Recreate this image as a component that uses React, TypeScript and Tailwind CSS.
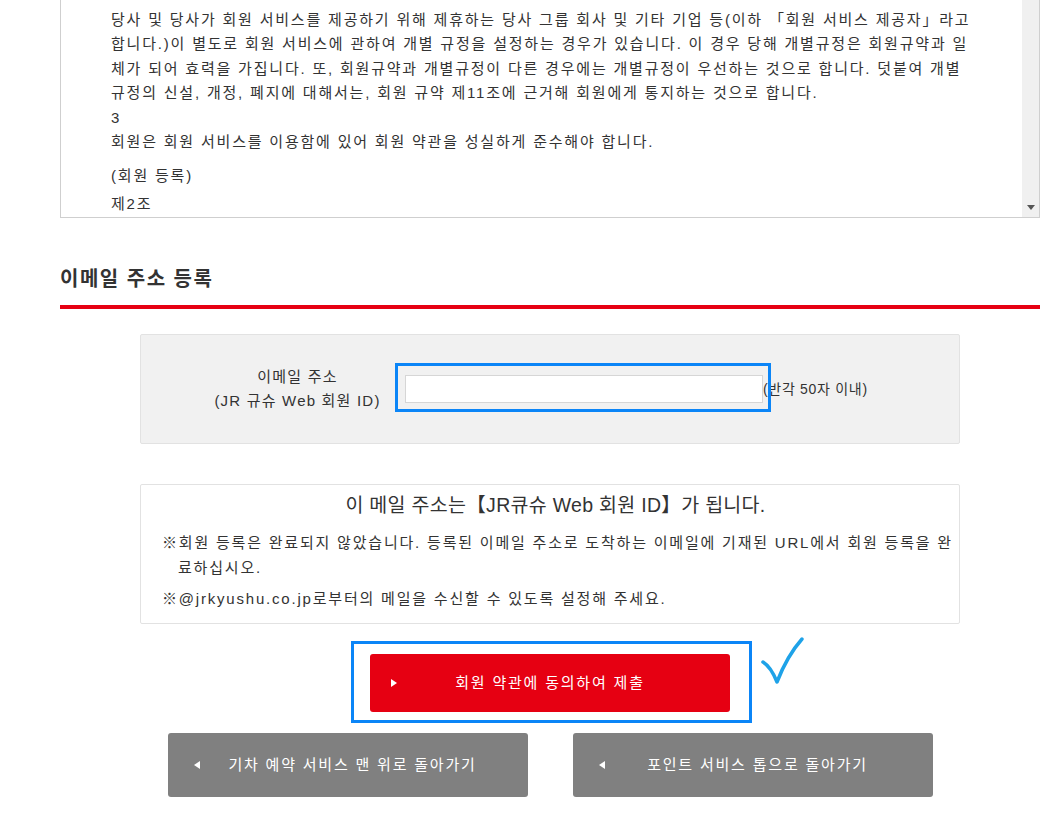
import React from "react";

const terms = [
  "당사 및 당사가 회원 서비스를 제공하기 위해 제휴하는 당사 그룹 회사 및 기타 기업 등(이하 「회원 서비스 제공자」라고",
  "합니다.)이 별도로 회원 서비스에 관하여 개별 규정을 설정하는 경우가 있습니다. 이 경우 당해 개별규정은 회원규약과 일",
  "체가 되어 효력을 가집니다. 또, 회원규약과 개별규정이 다른 경우에는 개별규정이 우선하는 것으로 합니다. 덧붙여 개별",
  "규정의 신설, 개정, 폐지에 대해서는, 회원 규약 제11조에 근거해 회원에게 통지하는 것으로 합니다.",
];

function TermsBox() {
  return (
    <div className="flex h-[218px] border border-t-0 border-[#cfcfcf]">
      <div className="flex-1 overflow-hidden pl-[50px] text-[15px] leading-[24.5px] text-[#333]">
        <div className="-mt-[17px]">
          <p>2</p>
          <p>
            {terms.map((t, i) => (
              <span key={i} className="block whitespace-nowrap">
                {t}
              </span>
            ))}
          </p>
          <p>3</p>
          <p>회원은 회원 서비스를 이용함에 있어 회원 약관을 성실하게 준수해야 합니다.</p>
          <p className="mt-[9px]">(회원 등록)</p>
          <p className="mt-[4px]">제2조</p>
        </div>
      </div>
      {/* fake scrollbar */}
      <div className="flex w-[17px] flex-col justify-end items-center bg-[#f0f0f0] pb-[7px]">
        <svg width="8" height="5" viewBox="0 0 8 5">
          <path d="M0 0H8L4 5Z" fill="#555" />
        </svg>
      </div>
    </div>
  );
}

function Arrow({ dir }: { dir: "left" | "right" }) {
  return (
    <svg
      width="6"
      height="8"
      viewBox="0 0 6 8"
      className="absolute top-1/2 -translate-y-1/2"
      style={{ left: dir === "right" ? 21 : 26 }}
    >
      {dir === "right" ? (
        <path d="M0 0L6 4L0 8Z" fill="#fff" />
      ) : (
        <path d="M6 0L0 4L6 8Z" fill="#fff" />
      )}
    </svg>
  );
}

export default function App() {
  return (
    <div className="min-h-[831px] bg-white font-['Liberation_Sans','Noto_Sans_CJK_KR',sans-serif] tracking-[1.8px] text-[#333]">
      <div className="ml-[60px] w-[980px] pb-[34px]">
        <TermsBox />

        <h2 className="mt-[49px] pb-[14px] text-[20px] font-bold leading-[24px] tracking-[1.5px] text-[#333]">
          이메일 주소 등록
        </h2>
        <div className="h-[4px] bg-[#e60012]" />

        {/* email input panel */}
        <div className="mx-auto mt-[25px] flex h-[110px] w-[820px] items-center rounded-[2px] border border-[#e2e2e2] bg-[#f1f1f1] pl-[49px]">
          <div className="w-[215px] text-center text-[15px] leading-[24px] tracking-[1.2px] text-[#333]">
            <p>이메일 주소</p>
            <p>(JR 규슈 Web 회원 ID)</p>
          </div>
          <div className="relative">
            <input
              type="text"
              className="block h-[28px] w-[358px] border border-[#d6d6d6] bg-white outline-none"
            />
            <div className="pointer-events-none absolute -left-[10px] -right-[8px] -top-[12px] -bottom-[9px] border-[3px] border-[#0b85f7]" />
          </div>
          <span className="text-[14px] tracking-[0.7px] text-[#333]">(반각 50자 이내)</span>
        </div>

        {/* notice */}
        <div className="mx-auto mt-[40px] h-[140px] w-[820px] rounded-[2px] border border-[#e2e2e2] bg-white pt-[6px] pl-[21px] pr-[10px]">
          <p className="text-center text-[19.5px] leading-[28px] tracking-[0.3px] text-[#333]">
            이 메일 주소는【JR큐슈 Web 회원 ID】가 됩니다.
          </p>
          <p className="mt-[11px] pl-[16px] -indent-[16px] text-[15px] leading-[25px] whitespace-nowrap">
            ※회원 등록은 완료되지 않았습니다. 등록된 이메일 주소로 도착하는 이메일에 기재된 URL에서 회원 등록을 완
            <br />
            료하십시오.
          </p>
          <p className="mt-[6px] text-[15px] leading-[25px]">
            ※@jrkyushu.co.jp로부터의 메일을 수신할 수 있도록 설정해 주세요.
          </p>
        </div>

        {/* submit */}
        <div className="mt-[30px] flex justify-center">
          <div className="relative">
            <button
              type="button"
              className="relative flex h-[58px] w-[360px] items-center justify-center rounded-[3px] bg-[#e60012] text-[15px] text-white"
            >
              <Arrow dir="right" />
              회원 약관에 동의하여 제출
            </button>
            <div className="pointer-events-none absolute -left-[19px] -right-[22px] -top-[13px] -bottom-[11px] border-[3px] border-[#0b85f7]" />
            <svg
              width="50"
              height="54"
              viewBox="0 0 50 54"
              className="pointer-events-none absolute left-[388px] -top-[20px]"
            >
              <path
                d="M5 28 Q13 33 19 48 Q29 22 44 5"
                fill="none"
                stroke="#1ea2e8"
                strokeWidth="3.5"
                strokeLinecap="round"
                strokeLinejoin="round"
              />
            </svg>
          </div>
        </div>

        {/* back buttons */}
        <div className="mt-[21px] flex justify-center gap-[45px]">
          <button
            type="button"
            className="relative flex h-[64px] w-[360px] items-center justify-center rounded-[3px] bg-[#808080] pl-[10px] text-[15px] text-white"
          >
            <Arrow dir="left" />
            기차 예약 서비스 맨 위로 돌아가기
          </button>
          <button
            type="button"
            className="relative flex h-[64px] w-[360px] items-center justify-center rounded-[3px] bg-[#808080] pl-[10px] text-[15px] text-white"
          >
            <Arrow dir="left" />
            포인트 서비스 톱으로 돌아가기
          </button>
        </div>
      </div>
    </div>
  );
}
